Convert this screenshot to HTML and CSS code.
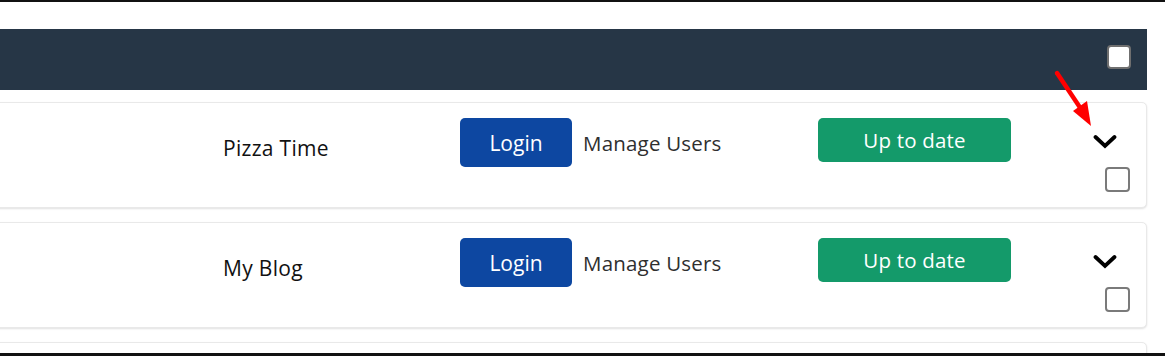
FILE: index.html
```html
<!DOCTYPE html>
<html>
<head>
<meta charset="utf-8">
<link rel="stylesheet" href="styles.css">
</head>
<body>
<div class="frame">
  <div class="main">
    <div class="table-head">
      <span class="checkbox checkbox-head"></span>
    </div>
    <div class="list">
      <div class="site-card">
        <div class="cell-blank"></div>
        <div class="site-name">Pizza Time</div>
        <div class="actions">
          <button class="btn btn-login">Login</button>
          <span class="manage">Manage Users</span>
        </div>
        <div class="status">
          <button class="btn btn-status">Up to date</button>
        </div>
        <div class="controls">
          <svg class="chevron" width="24" height="15" viewBox="0 0 24 15"><polyline points="2.5,3 12,12 21.5,3" fill="none" stroke="#000" stroke-width="3.8" stroke-linecap="round" stroke-linejoin="miter"/></svg>
          <span class="checkbox"></span>
        </div>
        <svg class="pointer" width="50" height="70" viewBox="0 0 50 70"><line x1="4" y1="4" x2="28" y2="40" stroke="#ff0000" stroke-width="4.5" stroke-linecap="round"/><polygon points="20,42 34,32 38,57" fill="#ff0000"/></svg>
      </div>
      <div class="site-card">
        <div class="cell-blank"></div>
        <div class="site-name">My Blog</div>
        <div class="actions">
          <button class="btn btn-login">Login</button>
          <span class="manage">Manage Users</span>
        </div>
        <div class="status">
          <button class="btn btn-status">Up to date</button>
        </div>
        <div class="controls">
          <svg class="chevron" width="24" height="15" viewBox="0 0 24 15"><polyline points="2.5,3 12,12 21.5,3" fill="none" stroke="#000" stroke-width="3.8" stroke-linecap="round" stroke-linejoin="miter"/></svg>
          <span class="checkbox"></span>
        </div>
      </div>
      <div class="site-card"></div>
    </div>
  </div>
</div>
</body>
</html>
```
FILE: styles.css
```css
* { box-sizing: border-box; }
html, body { margin: 0; padding: 0; background: #fff; }
body { font-family: "Open Sans", "Liberation Sans", sans-serif; }

.frame {
  height: 356px;
  border-top: 2px solid #111;
  border-bottom: 3px solid #111;
  overflow: hidden;
}
.main {
  width: 1147px;
  padding-top: 27px;
}
.table-head {
  height: 61px;
  background: #263646;
  display: flex;
  justify-content: flex-end;
  align-items: flex-start;
  padding: 16px 16px 0 0;
}
.checkbox {
  display: block;
  width: 25px;
  height: 25px;
  border: 2px solid #7a7a7a;
  border-radius: 4px;
  background: #fff;
}
.checkbox-head {
  width: 24px;
  height: 24px;
  border-color: #6f6f6f;
}
.list {
  margin-left: -10px;
  margin-top: 12px;
  display: flex;
  flex-direction: column;
  gap: 14px;
}
.site-card {
  position: relative;
  height: 106px;
  flex-shrink: 0;
  border: 1px solid #e9e9e9;
  border-radius: 5px;
  box-shadow: 0 1px 2px rgba(0,0,0,0.12);
  background: #fff;
  display: grid;
  grid-template-columns: 232px 237px 358px 193px 1fr;
  align-items: start;
  padding: 15px 16px 15px 0;
}
.site-name {
  padding-top: 16px;
  font-size: 21px;
  line-height: 28px;
  letter-spacing: 0.3px;
  color: #111;
}
.actions {
  display: flex;
  align-items: center;
  gap: 11px;
}
.btn {
  border: none;
  color: #fff;
  font-family: "Open Sans", "Liberation Sans", sans-serif;
  font-size: 21px;
  border-radius: 5px;
  padding: 0;
  cursor: pointer;
}
.btn-login {
  width: 112px;
  height: 49px;
  background: #0d47a1;
  line-height: 46px;
}
.manage {
  font-size: 20.5px;
  letter-spacing: 0.2px;
  color: #2f2f2f;
  line-height: 46px;
}
.btn-status {
  width: 193px;
  height: 44px;
  background: #149a6a;
  font-size: 20.5px;
  letter-spacing: 0.2px;
  line-height: 42px;
}
.controls {
  display: flex;
  flex-direction: column;
  align-items: flex-end;
}
.chevron {
  display: block;
  margin-top: 16px;
  margin-right: 13px;
}
.controls .checkbox {
  margin-top: 18px;
}
.pointer {
  position: absolute;
  left: 1062px;
  top: -34px;
}
```
